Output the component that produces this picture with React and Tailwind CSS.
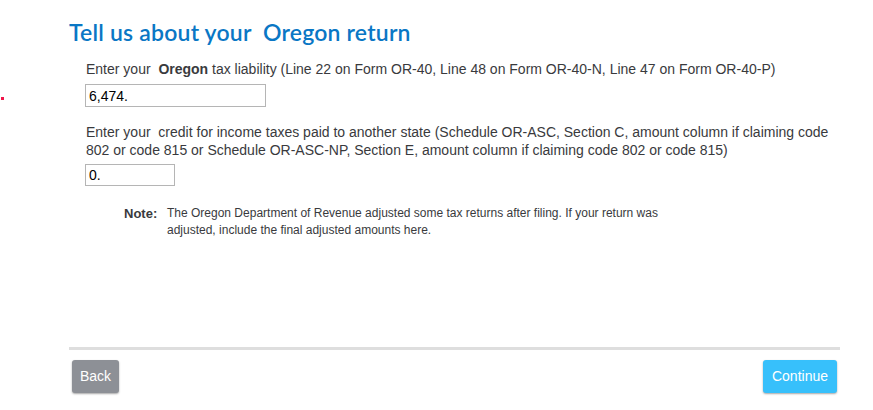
import React from 'react';

const App = () => {
  return (
    <div className="relative w-[873px] h-[410px] bg-white" style={{ fontFamily: 'Arial, "Liberation Sans", sans-serif' }}>
      <span className="absolute left-[1px] top-[97px] w-[3px] h-[3px] bg-[#f0154a]" />
      <div className="flex flex-col h-full pl-[69px] pr-[33px]">
        <h1
          className="mt-[18px] text-[23px] leading-[28px] font-semibold tracking-[0.2px] text-[#0a77c5] whitespace-pre"
          style={{ fontFamily: 'Lato, "Open Sans", sans-serif' }}
        >
          Tell us about your  Oregon return
        </h1>

        <div className="pl-[17px] mt-[14px]">
          <p className="text-[14px] leading-[18px] text-[#393a3d] whitespace-pre">
            Enter your  <b>Oregon</b> tax liability (Line 22 on Form OR-40, Line 48 on Form OR-40-N, Line 47 on Form OR-40-P)
          </p>
          <input
            type="text"
            readOnly
            value="6,474."
            className="mt-[6px] -ml-[1px] block w-[181px] h-[23px] px-[3px] text-[14px] text-black border border-[#b5b5b5] outline-none"
          />

          <p className="mt-[16px] text-[14px] leading-[18px] text-[#393a3d] pr-[10px]">
            Enter your&nbsp; credit for income taxes paid to another state (Schedule OR-ASC, Section C, amount column if claiming code 802 or code 815 or Schedule OR-ASC-NP, Section E, amount column if claiming code 802 or code 815)
          </p>
          <input
            type="text"
            readOnly
            value="0."
            className="mt-[5px] -ml-[1px] block w-[90px] h-[22px] px-[3px] text-[14px] text-black border border-[#b5b5b5] outline-none"
          />

          <div className="flex mt-[19px] ml-[38px] text-[12px] leading-[17px] text-[#393a3d]">
            <span className="font-bold text-[13px] w-[43px] shrink-0">Note:</span>
            <span className="w-[500px]">
              The Oregon Department of Revenue adjusted some tax returns after filing. If your return was adjusted, include the final adjusted amounts here.
            </span>
          </div>
        </div>

        <div className="mt-auto border-t-[3px] border-[#dedede]" />
        <div className="flex justify-between pt-[10px] pb-[17px] px-[3px]">
          <button className="h-[33px] px-[8px] rounded-[3px] bg-[#8d9096] text-white text-[14px] shadow-[0_1px_2px_rgba(0,0,0,0.35)]">
            Back
          </button>
          <button className="h-[33px] px-[9px] rounded-[3px] bg-[#37c0fb] text-white text-[14px] shadow-[0_1px_2px_rgba(0,0,0,0.35)]">
            Continue
          </button>
        </div>
      </div>
    </div>
  );
};

export default App;
